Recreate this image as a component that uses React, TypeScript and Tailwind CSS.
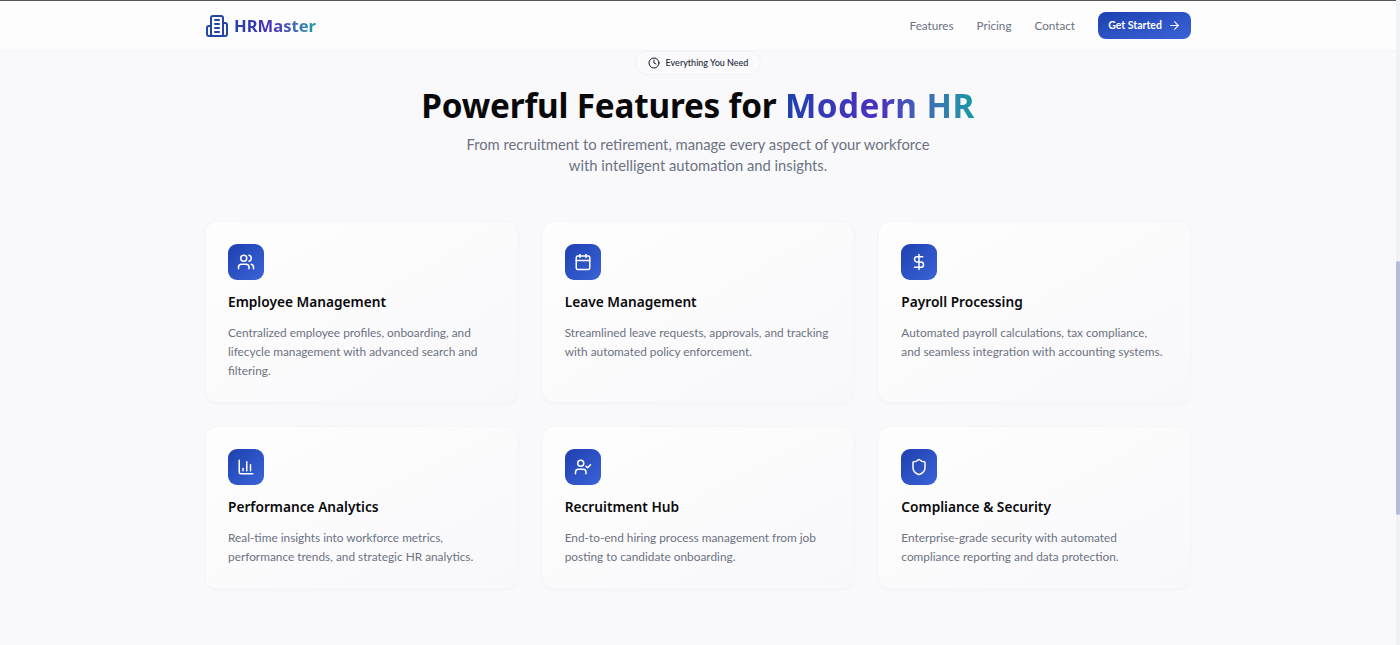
import { ArrowRight, BarChart3, Calendar, Clock, DollarSign, Shield, UserCheck, Users } from 'lucide-react';

const features = [
  {
    icon: Users,
    title: 'Employee Management',
    text: 'Centralized employee profiles, onboarding, and lifecycle management with advanced search and filtering.',
  },
  {
    icon: Calendar,
    title: 'Leave Management',
    text: 'Streamlined leave requests, approvals, and tracking with automated policy enforcement.',
  },
  {
    icon: DollarSign,
    title: 'Payroll Processing',
    text: 'Automated payroll calculations, tax compliance, and seamless integration with accounting systems.',
  },
  {
    icon: BarChart3,
    title: 'Performance Analytics',
    text: 'Real-time insights into workforce metrics, performance trends, and strategic HR analytics.',
  },
  {
    icon: UserCheck,
    title: 'Recruitment Hub',
    text: 'End-to-end hiring process management from job posting to candidate onboarding.',
  },
  {
    icon: Shield,
    title: 'Compliance & Security',
    text: 'Enterprise-grade security with automated compliance reporting and data protection.',
  },
];

function LogoIcon() {
  return (
    <svg viewBox="0 0 24 24" fill="none" stroke="currentColor" strokeWidth="2" strokeLinecap="round" strokeLinejoin="round" className="h-6 w-6 text-[#2446a8]">
      <path d="M6 22V4a2 2 0 0 1 2-2h8a2 2 0 0 1 2 2v18Z" />
      <path d="M6 12H4a2 2 0 0 0-2 2v6a2 2 0 0 0 2 2h2" />
      <path d="M18 9h2a2 2 0 0 1 2 2v9a2 2 0 0 1-2 2h-2" />
      <path d="M10 6h4" />
      <path d="M10 10h4" />
      <path d="M10 14h4" />
      <path d="M10 18h4" />
    </svg>
  );
}

function Navbar() {
  return (
    <header className="h-[51px] border-t border-b border-t-[#555555] border-b-[#f3f4f7] bg-[#fdfdfe] pr-1">
      <div className="mx-auto flex h-full w-[986px] items-center justify-between">
        <div className="flex items-center gap-[5px]">
          <LogoIcon />
          <span className="bg-gradient-to-r from-[#1e40af] via-[#4c2fc0] to-[#0d9aa5] bg-clip-text text-[16.6px] font-bold leading-6 text-transparent">
            HRMaster
          </span>
        </div>
        <nav className="flex items-center gap-[23px] font-['Lato',sans-serif] text-[11.7px] text-[#6b7280]">
          <span>Features</span>
          <span>Pricing</span>
          <span>Contact</span>
          <button className="flex h-[27px] w-[93px] items-center justify-center gap-[6px] rounded-lg bg-gradient-to-br from-[#1e40af] to-[#3b64d8] text-[10.5px] font-bold text-white">
            Get Started
            <ArrowRight className="h-[13px] w-[13px]" />
          </button>
        </nav>
      </div>
    </header>
  );
}

export default function App() {
  return (
    <div className="relative h-[645px] overflow-hidden bg-[#f9f9fc] font-['Noto_Sans',sans-serif]">
      <Navbar />
      <main className="pr-1">
        <div className="mx-auto flex w-[986px] flex-col items-center">
          <div className="flex h-6 w-[126px] items-center justify-center gap-[6px] rounded-full border border-[#f1f2f5] bg-[#fbfbfd] font-['Lato',sans-serif] text-[9px] font-medium text-[#1f2937]">
            <Clock className="h-3 w-3 text-[#111827]" />
            Everything You Need
          </div>
          <h1 className="mt-2 text-[33.3px] font-bold leading-[44px] text-[#09090b]">
            <span className="tracking-[-0.2px]">Powerful Features for </span>
            <span className="bg-gradient-to-r from-[#1e40af] via-[#4c2fc0] to-[#0d9aa5] bg-clip-text tracking-[0.45px] text-transparent">
              Modern HR
            </span>
          </h1>
          <p className="mt-[7px] w-[520px] text-center font-['Lato',sans-serif] text-[14.75px] leading-[20.5px] text-[#6b7280]">
            From recruitment to retirement, manage every aspect of your workforce
            <br />
            with intelligent automation and insights.
          </p>
          <div className="mt-[46px] grid w-full grid-cols-3 gap-x-[24px] gap-y-[23px]">
            {features.map((f) => (
              <div
                key={f.title}
                className="rounded-xl border border-[#f7f7fa] bg-gradient-to-br from-[#fefefe] to-[#f8f8fb] px-[22px] pb-[22px] pt-[22px] shadow-[0_1px_3px_rgba(0,0,0,0.03)]"
              >
                <div className="flex h-9 w-9 items-center justify-center rounded-[9px] bg-gradient-to-br from-[#1e40af] to-[#3b64d8]">
                  <f.icon className="h-[18px] w-[18px] text-white" />
                </div>
                <h3 className="mt-[10px] text-[13.7px] font-semibold leading-[24px] text-[#09090b]">{f.title}</h3>
                <p className="mt-[9px] font-['Lato',sans-serif] text-[11.85px] leading-[19px] text-[#6b7280]">{f.text}</p>
              </div>
            ))}
          </div>
        </div>
      </main>
      <div className="absolute bottom-0 right-0 top-0 w-1 bg-[#f1f2f5]">
        <div className="mt-[261px] h-[254px] rounded-sm bg-[#b4bcdc]" />
      </div>
    </div>
  );
}
